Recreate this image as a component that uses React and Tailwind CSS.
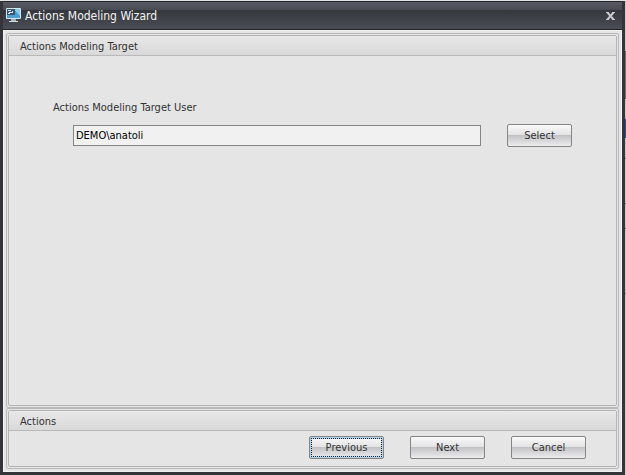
import { useState } from 'react';

const MonitorIcon = () => (
    <svg width="15" height="15" viewBox="0 0 15 15" className="shrink-0">
        <rect x="0" y="0" width="15" height="11" rx="1" fill="#d3e6f0" />
        <rect x="1" y="1" width="13" height="9" fill="#4f9fd2" />
        <path d="M8 1h6v7z" fill="#8fcbec" />
        <rect x="1" y="1" width="8" height="6" fill="#34566f" />
        <path d="M2 2.5h3M3 4.5h4M6 3.5h1M2 5.5h2" stroke="#dbe8f0" />
        <rect x="5" y="11" width="5" height="2" fill="#9fb3c0" />
        <rect x="3" y="13" width="9" height="1" fill="#d3dce2" />
    </svg>
);

const Panel = ({ title, className = '', children }) => (
    <section className={`flex flex-col rounded-xs border border-[#b9b9b9] p-px ${className}`}>
        <div className="flex flex-1 flex-col rounded-xs border border-[#b4b4b4]">
            <h2 className="h-5 border-b border-[#b9b9b9] bg-linear-to-b from-[#e8e8e8] to-[#d9d9d9] pl-[11px] leading-[21px]">
                {title}
            </h2>
            {children}
        </div>
    </section>
);

const WizardButton = ({ className = 'pt-[2px]', children, ...props }) => (
    <button
        type="button"
        className={`h-[23px] shrink-0 rounded-xs border border-[#858585] bg-[linear-gradient(to_bottom,#fafafa_0%,#e2e2e4_48%,#c3c3c6_50%,#ececee_100%)] ${className}`}
        {...props}
    >
        {children}
    </button>
);

const App = () => {
    const [user, setUser] = useState('DEMO\\anatoli');

    return (
        <div className="flex h-screen min-h-60 bg-[#dfe3e3] pt-px font-['DejaVu_Sans_Condensed','DejaVu_Sans',sans-serif] text-[11px] text-[#333333]">
            <main className="flex flex-1 flex-col border-x-3 border-b-3 border-[#34353a] bg-[#e5e5e5]">
                <header className="flex h-[29px] items-center border-y border-[#23252a] bg-[linear-gradient(to_bottom,#575a62_0%,#484b53_30%,#34373c_31%,#4a4d55_100%)] pr-[7px] pl-[3px]">
                    <MonitorIcon />
                    <h1 className="ml-1 flex-1 text-xs text-[#f2f2f2]">Actions Modeling Wizard</h1>
                    <button type="button" aria-label="Close" className="text-[#c9cacd]">
                        <svg width="9" height="8" viewBox="0 0 9 8">
                            <path d="M0 0.5h3M6 0.5h3M0 7.5h3M6 7.5h3" stroke="currentColor" />
                            <path d="M1.5 0.5l6 7M7.5 0.5l-6 7" stroke="currentColor" strokeWidth="2" />
                        </svg>
                    </button>
                </header>

                <div className="flex flex-1 flex-col border border-[#f2f2f2] p-[2px]">
                    <Panel title="Actions Modeling Target" className="flex-1">
                        <div className="pt-11 pr-11 pl-11">
                            <label htmlFor="target-user" className="block leading-4">
                                Actions Modeling Target User
                            </label>
                            <div className="mt-2 flex items-center gap-[26px] pl-5">
                                <input
                                    id="target-user"
                                    type="text"
                                    value={user}
                                    onChange={e => setUser(e.target.value)}
                                    className="h-[21px] min-w-0 flex-1 border border-[#858585] bg-[#f1f1f1] px-[2px] text-black"
                                />
                                <WizardButton className="w-[65px] pt-[2px]">Select</WizardButton>
                            </div>
                        </div>
                    </Panel>

                    <Panel title="Actions">
                        <div className="flex justify-end gap-[26px] pt-[5px] pr-[30px] pb-[7px]">
                            <WizardButton className="w-[75px] border-[#5f7f9b] bg-[linear-gradient(to_bottom,#f4f7fa_0%,#e0e4e8_48%,#c3c7cc_50%,#e6eaee_100%)] p-px shadow-[inset_0_0_0_2px_#b4d3ea]">
                                <span className="flex h-full items-center justify-center border border-dotted border-[#1d2a36] pt-[2px]">
                                    Previous
                                </span>
                            </WizardButton>
                            <WizardButton className="w-[75px] pt-[2px]">Next</WizardButton>
                            <WizardButton className="w-[75px] pt-[2px]">Cancel</WizardButton>
                        </div>
                    </Panel>
                </div>
            </main>

            {/* edge of the window behind */}
            <div className="flex w-px flex-col bg-[#c9c9c9]">
                <div className="mt-[50px] h-12 bg-[#6f6f6f]" />
                <div className="mt-5 h-[19px] bg-[#2750a0]" />
                <div className="mt-5 h-px bg-[#777777]" />
                <div className="mt-11 h-px bg-[#777777]" />
                <div className="mt-6 h-px bg-[#777777]" />
                <div className="mt-16 h-px bg-[#777777]" />
            </div>
        </div>
    );
};

export default App;
